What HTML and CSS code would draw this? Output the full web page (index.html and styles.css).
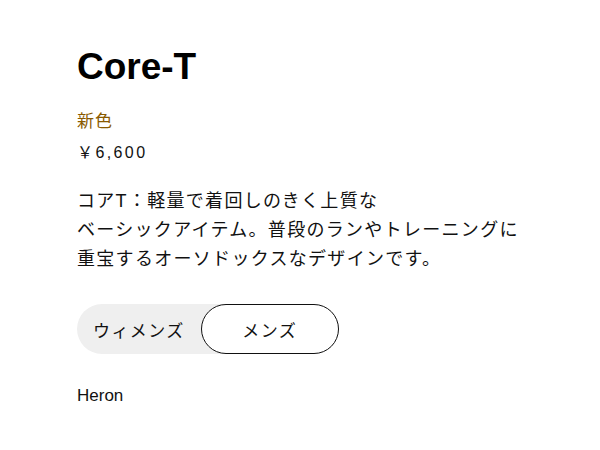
FILE: index.html
```html
<!DOCTYPE html>
<html lang="ja">
<head>
<meta charset="utf-8">
<link rel="stylesheet" href="styles.css">
</head>
<body>
<main class="product">
  <h1 class="title">Core-T</h1>
  <p class="badge">新色</p>
  <p class="price">￥6,600</p>
  <p class="desc">コアT：軽量で着回しのきく上質な<br>ベーシックアイテム。普段のランやトレーニングに<br>重宝するオーソドックスなデザインです。</p>
  <div class="toggle">
    <button class="seg">ウィメンズ</button>
    <button class="seg active">メンズ</button>
  </div>
  <p class="color">Heron</p>
</main>
</body>
</html>
```
FILE: styles.css
```css
* { box-sizing: border-box; }
body {
  margin: 0;
  background: #fff;
  color: #111;
  font-family: "Liberation Sans", "Noto Sans CJK JP", sans-serif;
}
.product {
  padding: 41px 77px 0;
}
.title {
  margin: 0;
  font-size: 37px;
  font-weight: 700;
  line-height: 52px;
  color: #000;
}
.badge {
  margin: 17px 0 0;
  font-size: 17px;
  line-height: 24px;
  color: #8a5a00;
  letter-spacing: 1px;
}
.price {
  margin: 7px 0 0;
  font-size: 16px;
  line-height: 24px;
  letter-spacing: 2.4px;
}
.desc {
  margin: 22px 0 0;
  font-size: 18px;
  line-height: 29px;
  letter-spacing: 1.3px;
}
.toggle {
  margin-top: 30px;
  display: inline-flex;
  background: #efefef;
  border-radius: 25px;
}
.seg {
  font-family: inherit;
  font-size: 17px;
  letter-spacing: 1.4px;
  color: #111;
  background: transparent;
  border: 1px solid transparent;
  border-radius: 25px;
  height: 50px;
  padding: 0 15px;
  cursor: pointer;
}
.seg.active {
  background: #fff;
  border-color: #111;
  width: 138px;
}
.color {
  margin: 30px 0 0;
  font-size: 17px;
  line-height: 24px;
}
```
